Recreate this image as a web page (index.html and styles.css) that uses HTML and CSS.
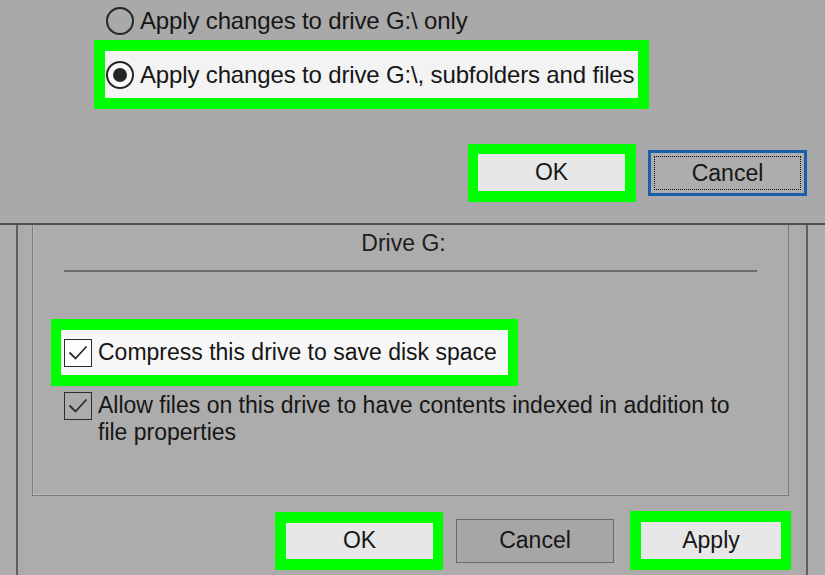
FILE: index.html
```html
<!DOCTYPE html>
<html>
<head>
    <meta charset="UTF-8">
    <title>Drive G: Properties</title>
    <link rel="stylesheet" href="styles.css">
</head>
<body>
    <div class="screen">
        <section class="dialog-top">
            <div class="choices">
                <label class="choice">
                    <span class="radio"></span>
                    <span>Apply changes to drive G:\ only</span>
                </label>
                <div class="highlight hl-choice">
                    <label class="choice choice-on">
                        <span class="radio radio-on"></span>
                        <span>Apply changes to drive G:\, subfolders and files</span>
                    </label>
                </div>
            </div>
            <div class="actions actions-top">
                <div class="highlight hl-btn">
                    <button class="btn btn-lit">OK</button>
                </div>
                <button class="btn btn-focus"><span class="focus-ring">Cancel</span></button>
            </div>
        </section>

        <section class="dialog-props">
            <div class="group">
                <div class="drive-label">Drive G:</div>
                <div class="rule"></div>
                <div class="highlight hl-check">
                    <label class="check check-on">
                        <span class="box">
                            <svg width="26" height="26" viewBox="0 0 26 26"><path d="M4.5 12.5 L10.5 18.5 L21.5 6.5" fill="none" stroke="#2b2b2b" stroke-width="1.8"/></svg>
                        </span>
                        <span>Compress this drive to save disk space</span>
                    </label>
                </div>
                <label class="check check-wrap">
                    <span class="box">
                        <svg width="26" height="26" viewBox="0 0 26 26"><path d="M4.5 12.5 L10.5 18.5 L21.5 6.5" fill="none" stroke="#2b2b2b" stroke-width="1.8"/></svg>
                    </span>
                    <span>Allow files on this drive to have contents indexed in addition to file properties</span>
                </label>
            </div>
            <div class="actions actions-bottom">
                <div class="highlight hl-ok">
                    <button class="btn btn-lit btn-ok">OK</button>
                </div>
                <button class="btn btn-plain">Cancel</button>
                <div class="highlight hl-apply">
                    <button class="btn btn-lit btn-apply">Apply</button>
                </div>
            </div>
        </section>
    </div>
</body>
</html>
```

FILE: styles.css
```css
body {
    margin: 0;
    background: #adadad;
    font-family: 'Liberation Sans', Arial, sans-serif;
    color: #161616;
}
.screen {
    width: 825px;
    height: 575px;
    overflow: hidden;
    display: flex;
    flex-direction: column;
}

/* top confirmation dialog */
.dialog-top {
    height: 225px;
    flex-shrink: 0;
    background: #a9a9a9;
    border-bottom: 2px solid #4f4f4f;
    box-sizing: border-box;
    display: flex;
    flex-direction: column;
}
.choices {
    padding: 6px 0 0 94px;
    display: flex;
    flex-direction: column;
    align-items: flex-start;
}
.choice {
    display: flex;
    align-items: center;
    gap: 6px;
    font-size: 24px;
    letter-spacing: -0.15px;
    height: 30px;
    padding-left: 12px;
    margin-bottom: 4px;
}
.choice-on {
    height: 47px;
    padding: 0 4px 0 1px;
    margin: 0;
    background: #f3f3f3;
}
.radio {
    width: 28px;
    height: 28px;
    box-sizing: border-box;
    border: 2px solid #262626;
    border-radius: 50%;
    display: flex;
    align-items: center;
    justify-content: center;
    flex-shrink: 0;
}
.radio-on {
    background: #fafafa;
}
.radio-on::after {
    content: '';
    width: 14px;
    height: 14px;
    border-radius: 50%;
    background: #262626;
}

.highlight {
    border: 11px solid #00ff00;
    display: flex;
}
.hl-btn {
    border-width: 10px 11px 11px 10px;
}

.actions {
    display: flex;
    align-items: center;
}
.actions-top {
    justify-content: flex-end;
    gap: 12px;
    padding: 35px 18px 0 0;
}

.btn {
    font-family: 'Liberation Sans', Arial, sans-serif;
    font-size: 23px;
    color: #161616;
    border: none;
    margin: 0;
    padding: 0;
    cursor: pointer;
}
.btn-lit {
    width: 147px;
    height: 37px;
    background: #e7e7e7;
}
.btn-focus {
    width: 159px;
    height: 46px;
    background: #adadad;
    border: 3px solid #1a5dab;
    padding: 3px;
    box-sizing: border-box;
    display: flex;
}
.focus-ring {
    flex: 1;
    border: 1px dotted #111;
    display: flex;
    align-items: center;
    justify-content: center;
}

/* properties dialog underneath */
.dialog-props {
    flex: 1;
    margin-left: 16px;
    width: 792px;
    box-sizing: border-box;
    background: #acacac;
    border-left: 2px solid #5e5e5e;
    border-right: 2px solid #5e5e5e;
    display: flex;
    flex-direction: column;
}
.group {
    margin-left: 14px;
    width: 757px;
    height: 271px;
    box-sizing: border-box;
    border: 1px solid #7a7a7a;
    border-top: none;
    box-shadow: inset 1px -1px 0 #bdbdbd;
    display: flex;
    flex-direction: column;
    align-items: flex-start;
}
.drive-label {
    align-self: stretch;
    text-align: center;
    font-size: 23px;
    line-height: 28px;
    padding-top: 4px;
    margin-left: -14px;
    color: #1e1e1e;
}
.rule {
    align-self: stretch;
    height: 2px;
    background: #6d6d6d;
    margin: 13px 31px 0 31px;
}
.hl-check {
    margin: 47px 0 0 18px;
    border-width: 11px 10px;
}
.check {
    display: flex;
    align-items: flex-start;
    gap: 6px;
    font-size: 23px;
    line-height: 27px;
}
.check-on {
    background: #f7f7f7;
    height: 45px;
    align-items: center;
    padding: 0 11px 0 3px;
}
.box {
    width: 28px;
    height: 28px;
    box-sizing: border-box;
    border: 1.5px solid #2b2b2b;
    display: flex;
    align-items: center;
    justify-content: center;
    flex-shrink: 0;
}
.check-on .box {
    background: #fdfdfd;
}
.check-wrap {
    margin: 6px 0 0 31px;
    width: 680px;
}

.actions-bottom {
    padding: 15px 0 0 257px;
}
.hl-ok {
    border-width: 11px 10px 11px 11px;
}
.btn-ok {
    width: 147px;
    height: 36px;
}
.btn-plain {
    width: 158px;
    height: 44px;
    background: #a6a6a6;
    border: 1px solid #6a6a6a;
    margin: 0 16px 0 13px;
}
.hl-apply {
    border-width: 11px 10px 11px 11px;
}
.btn-apply {
    width: 140px;
    height: 37px;
}
```
